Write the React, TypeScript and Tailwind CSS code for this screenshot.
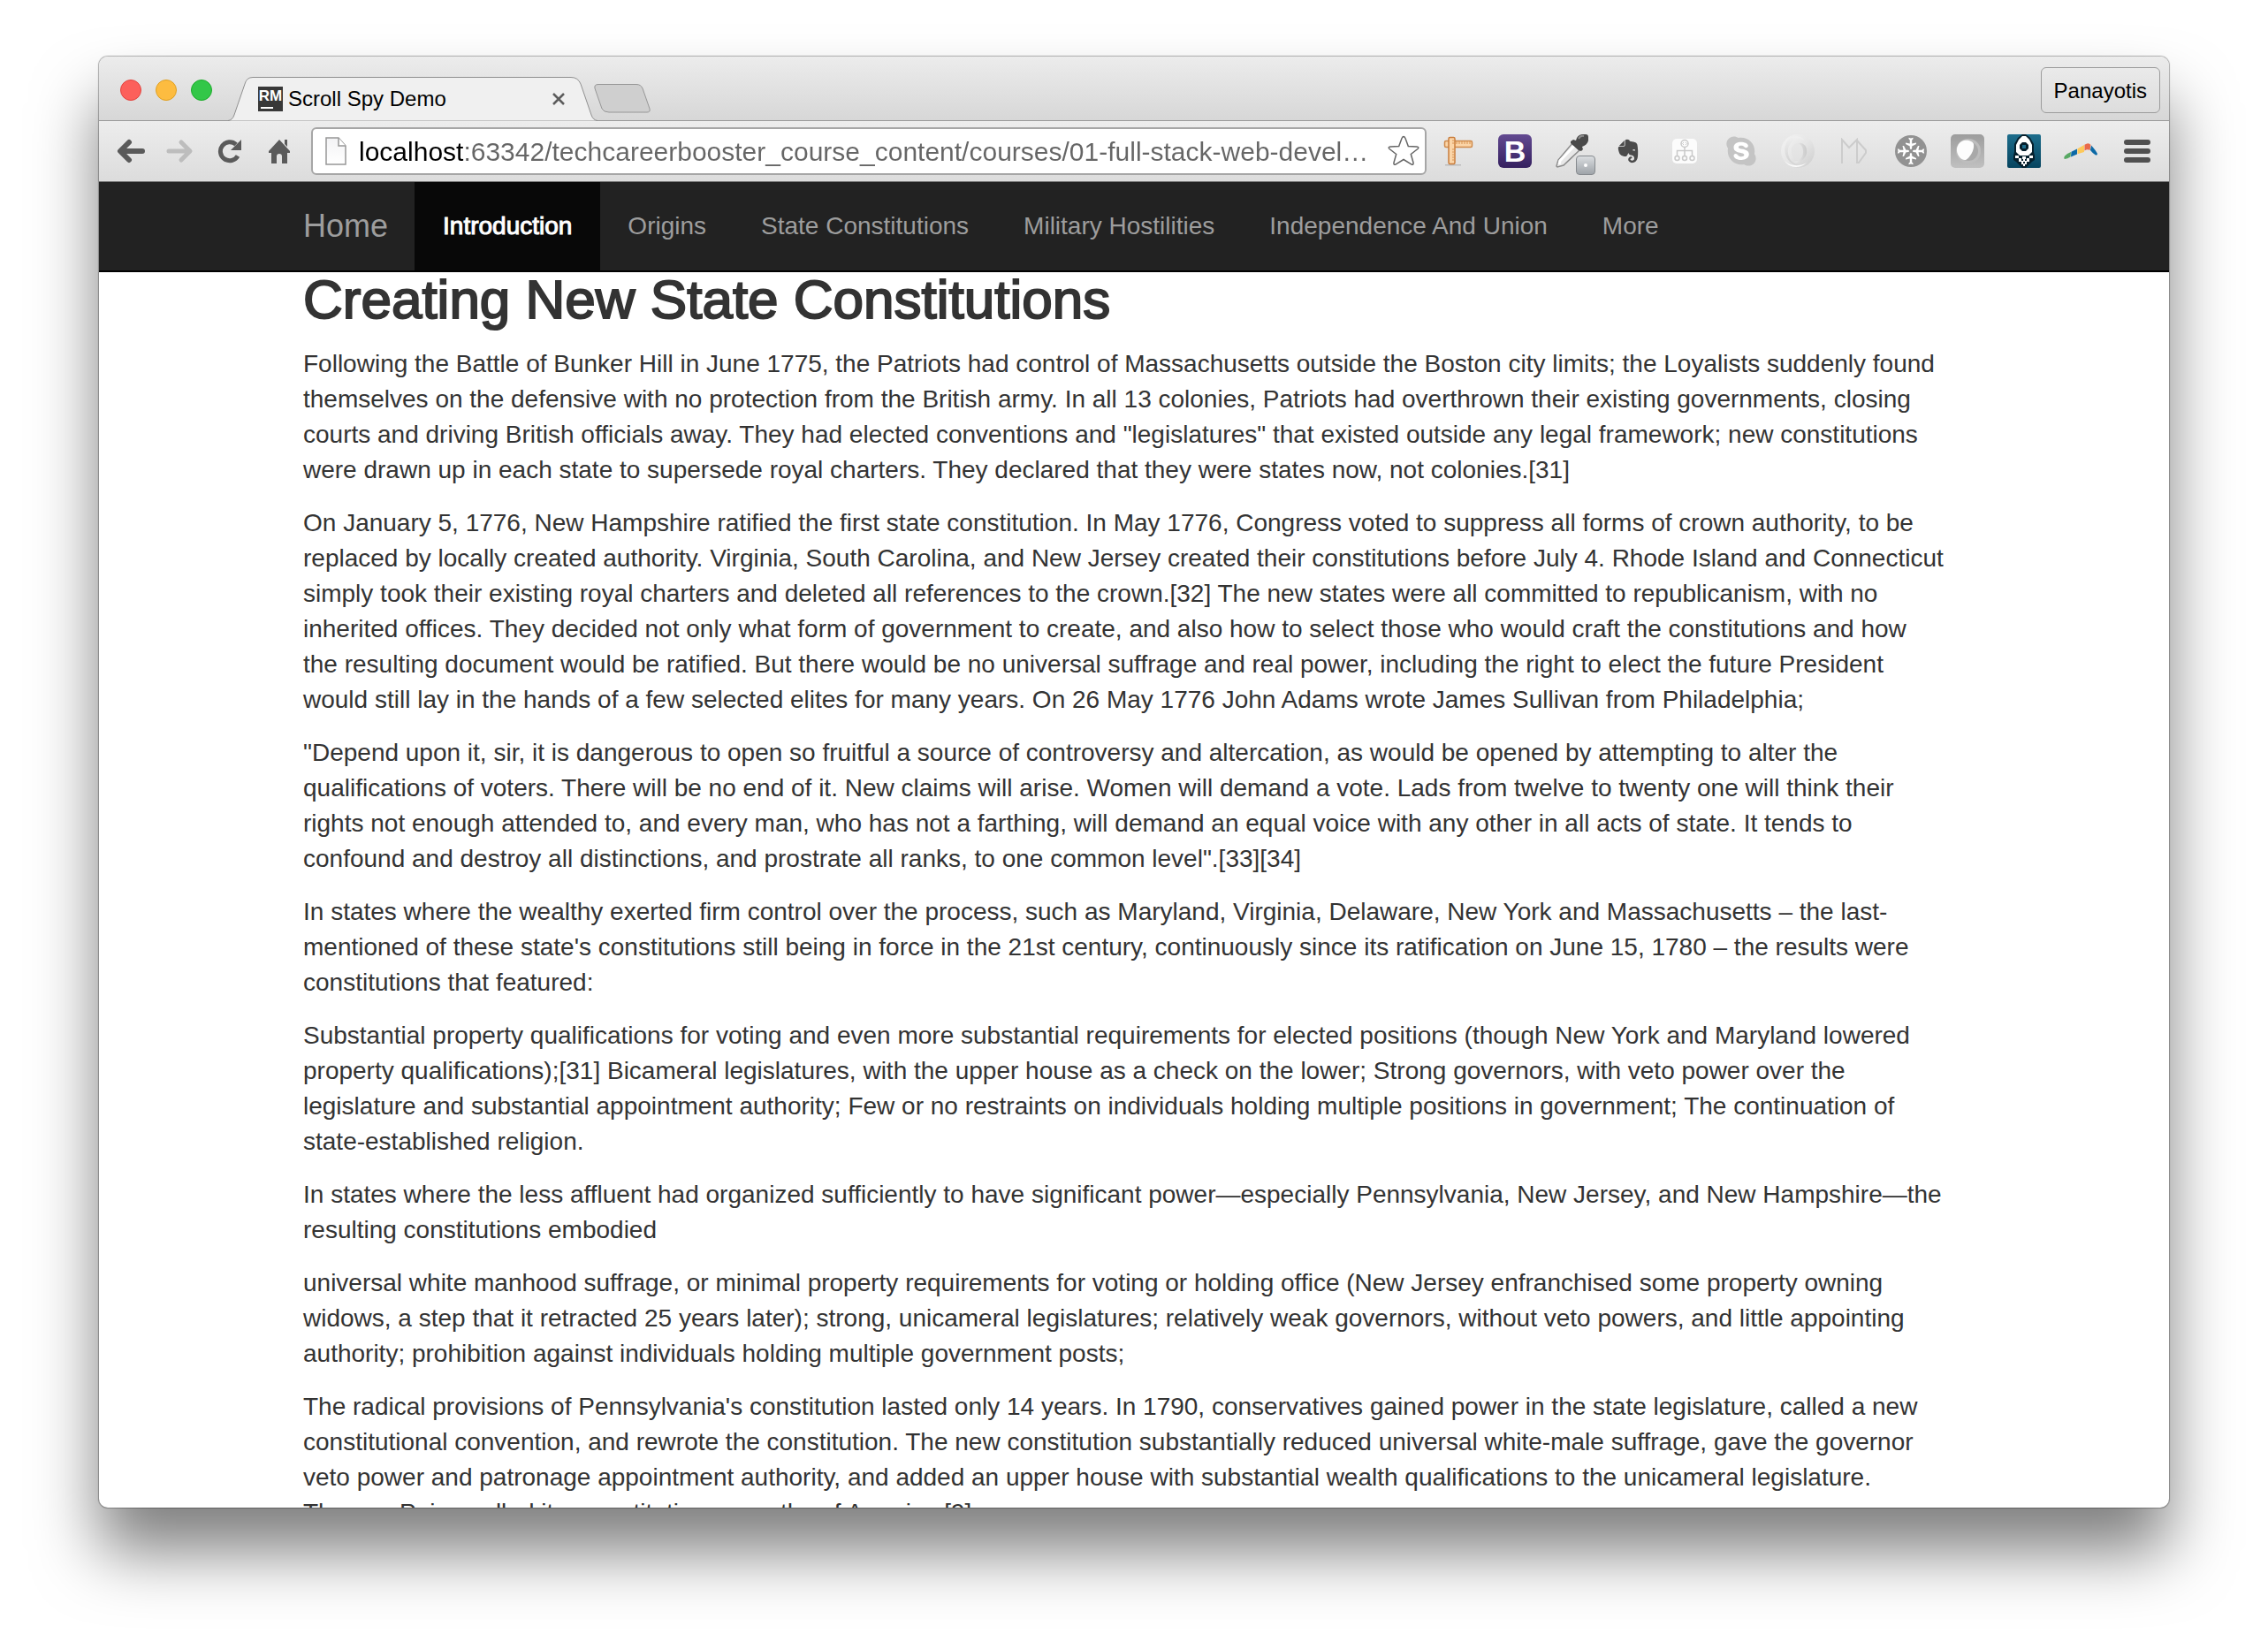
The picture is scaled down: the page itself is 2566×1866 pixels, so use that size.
import React from "react";
import { FaEvernote, FaSkype } from "react-icons/fa";

const url = "localhost:63342/techcareerbooster_course_content/courses/01-full-stack-web-devel…";

const links = [
  "Introduction",
  "Origins",
  "State Constitutions",
  "Military Hostilities",
  "Independence And Union",
  "More",
];

const paragraphs: string[][] = [
  [
    "Following the Battle of Bunker Hill in June 1775, the Patriots had control of Massachusetts outside the Boston city limits; the Loyalists suddenly found",
    "themselves on the defensive with no protection from the British army. In all 13 colonies, Patriots had overthrown their existing governments, closing",
    'courts and driving British officials away. They had elected conventions and "legislatures" that existed outside any legal framework; new constitutions',
    "were drawn up in each state to supersede royal charters. They declared that they were states now, not colonies.[31]",
  ],
  [
    "On January 5, 1776, New Hampshire ratified the first state constitution. In May 1776, Congress voted to suppress all forms of crown authority, to be",
    "replaced by locally created authority. Virginia, South Carolina, and New Jersey created their constitutions before July 4. Rhode Island and Connecticut",
    "simply took their existing royal charters and deleted all references to the crown.[32] The new states were all committed to republicanism, with no",
    "inherited offices. They decided not only what form of government to create, and also how to select those who would craft the constitutions and how",
    "the resulting document would be ratified. But there would be no universal suffrage and real power, including the right to elect the future President",
    "would still lay in the hands of a few selected elites for many years. On 26 May 1776 John Adams wrote James Sullivan from Philadelphia;",
  ],
  [
    '"Depend upon it, sir, it is dangerous to open so fruitful a source of controversy and altercation, as would be opened by attempting to alter the',
    "qualifications of voters. There will be no end of it. New claims will arise. Women will demand a vote. Lads from twelve to twenty one will think their",
    "rights not enough attended to, and every man, who has not a farthing, will demand an equal voice with any other in all acts of state. It tends to",
    'confound and destroy all distinctions, and prostrate all ranks, to one common level".[33][34]',
  ],
  [
    "In states where the wealthy exerted firm control over the process, such as Maryland, Virginia, Delaware, New York and Massachusetts – the last-",
    "mentioned of these state's constitutions still being in force in the 21st century, continuously since its ratification on June 15, 1780 – the results were",
    "constitutions that featured:",
  ],
  [
    "Substantial property qualifications for voting and even more substantial requirements for elected positions (though New York and Maryland lowered",
    "property qualifications);[31] Bicameral legislatures, with the upper house as a check on the lower; Strong governors, with veto power over the",
    "legislature and substantial appointment authority; Few or no restraints on individuals holding multiple positions in government; The continuation of",
    "state-established religion.",
  ],
  [
    "In states where the less affluent had organized sufficiently to have significant power—especially Pennsylvania, New Jersey, and New Hampshire—the",
    "resulting constitutions embodied",
  ],
  [
    "universal white manhood suffrage, or minimal property requirements for voting or holding office (New Jersey enfranchised some property owning",
    "widows, a step that it retracted 25 years later); strong, unicameral legislatures; relatively weak governors, without veto powers, and little appointing",
    "authority; prohibition against individuals holding multiple government posts;",
  ],
  [
    "The radical provisions of Pennsylvania's constitution lasted only 14 years. In 1790, conservatives gained power in the state legislature, called a new",
    "constitutional convention, and rewrote the constitution. The new constitution substantially reduced universal white-male suffrage, gave the governor",
    "veto power and patronage appointment authority, and added an upper house with substantial wealth qualifications to the unicameral legislature.",
    "Thomas Paine called it a constitution unworthy of America.[9]",
  ],
];

function BackArrow({ muted = false }: { muted?: boolean }) {
  return (
    <svg width="32" height="28" viewBox="0 0 32 28" fill="none" strokeWidth="6" strokeLinecap="round" strokeLinejoin="round">
      {muted ? (
        <path d="M3 14H26M17 4l10 10-10 10" stroke="#bdbdbd" strokeWidth="5" />
      ) : (
        <path d="M29 14H6M14 4L4 14l10 10" stroke="#5a5a5a" />
      )}
    </svg>
  );
}

function ReloadIcon() {
  return (
    <svg width="28" height="28" viewBox="0 0 28 28">
      <path d="M21 6.500A10.500 10.500 0 1 0 23 19.500" fill="none" stroke="#5a5a5a" strokeWidth="5" />
      <path d="M27 1v12H15z" fill="#5a5a5a" />
    </svg>
  );
}

function HomeIcon() {
  return (
    <svg width="26" height="28" viewBox="0 0 26 28" fill="#5a5a5a">
      <path d="M13 1L25 14v2h-3v12h-6v-8q0-3-3-3t-3 3v8H4V16H1v-2zM19 1h3v8l-3-3z" />
    </svg>
  );
}

function PageIcon() {
  return (
    <svg width="24" height="32" viewBox="0 0 24 32">
      <defs>
        <linearGradient id="page" x1="0" y1="0" x2="0" y2="1">
          <stop offset="0" stopColor="#f3f3f5" />
          <stop offset="1" stopColor="#fff" />
        </linearGradient>
      </defs>
      <path d="M1 1h14l8 9v21H1z" fill="url(#page)" stroke="#979797" strokeWidth="1.500" />
      <path d="M15 1v9h8" fill="#fff" stroke="#979797" strokeWidth="1.500" />
    </svg>
  );
}

function StarIcon() {
  return (
    <svg width="36" height="36" viewBox="0 0 36 36">
      <path
        d="M18 1.500c1 0 1.500 1 2 2l3.300 9 9.700.4c2 .1 2.300 1.500 1 2.600l-7.700 6 2.700 9.500c.5 2-.7 2.800-2.300 1.800L18 27.500l-8.700 5.300c-1.600 1-2.800.2-2.300-1.800L9.700 21.500 2 15.500c-1.300-1.100-1-2.500 1-2.600l9.700-.4 3.300-9c.5-1 1-2 2-2z"
        fill="#fff"
        stroke="#666"
        strokeWidth="1.500"
      />
    </svg>
  );
}

function RulerIcon() {
  return (
    <svg width="34" height="34" viewBox="0 0 34 34">
      <path d="M2 32h18v1.500H2z" fill="#bbb" />
      <rect x="1.500" y="5.500" width="31" height="7" rx="1.500" fill="#fbd5a8" stroke="#cf8a4b" strokeWidth="1.500" />
      <rect x="6" y="1.500" width="7" height="30" rx="1.500" fill="#fbd5a8" stroke="#c97d3c" strokeWidth="1.500" />
      <path d="M15 6v3M18 6v3M21 6v3M24 6v3M27 6v3M30 6v3M10 5h3M10 8h3M10 15h3M10 18h3M10 21h3M10 24h3M10 27h3" stroke="#d79251" />
    </svg>
  );
}

function BootstrapIcon() {
  return (
    <span className="flex size-[38px] items-center justify-center rounded-md bg-linear-to-b from-[#634a91] to-[#35205f] text-[34px] leading-none font-bold text-white">
      B
    </span>
  );
}

function DropperIcon() {
  return (
    <span className="relative block">
      <svg width="38" height="38" viewBox="0 0 38 38">
        <path d="M20 10l8 8L10 35l-7 2-1-1 2-7z" fill="#e8e8e8" stroke="#8c8c8c" strokeWidth="1.500" />
        <path d="M22 13L6 30l-1 4" stroke="#fff" strokeWidth="3" fill="none" />
        <path d="M18 8l3-2 3 1q1-6 7-7h4q3 0 3 3v4q-1 5-7 7l1 3-2 2-3-1-9-8z" fill="#4a4a4a" />
        <path d="M27 5q2-4 6-3" stroke="#8b8b8b" strokeWidth="2" fill="none" />
      </svg>
      <span className="absolute -right-2 -bottom-2 flex size-[22px] items-center justify-center rounded-sm border border-[#868a8e] bg-linear-to-b from-[#dadde0] to-[#9fa4a9]">
        <span className="size-1 rounded-full bg-white" />
      </span>
    </span>
  );
}

function SitemapIcon() {
  return (
    <svg width="28" height="28" viewBox="0 0 28 28" fill="none" stroke="#c9c9c9" strokeWidth="1.500">
      <rect width="28" height="28" rx="5" fill="#fcfcfc" stroke="none" />
      <circle cx="14" cy="5.500" r="4" />
      <path d="M13 4l-1.500 1.500L13 7M15 4l1.500 1.500L15 7" strokeWidth="1" />
      <path d="M14 9.500V19M5.500 19v-5.500h17V19" />
      <circle cx="5.500" cy="22" r="2.500" />
      <circle cx="14" cy="22" r="2.500" />
      <circle cx="22.500" cy="22" r="2.500" />
    </svg>
  );
}

function SkypeIcon() {
  return (
    <span className="flex size-[34px] items-center justify-center rounded-[14px] bg-[radial-gradient(circle,#fff_12px,transparent_13px)]">
      <FaSkype className="size-[38px] shrink-0 text-[#c4c4c4]" />
    </span>
  );
}

function RingIcon() {
  return (
    <svg width="38" height="38" viewBox="0 0 38 38" fill="none">
      <defs>
        <linearGradient id="ringOuter" x1="0" y1="0" x2="1" y2="1">
          <stop offset="0" stopColor="#f4f4f4" />
          <stop offset="0.500" stopColor="#e6e6e6" />
          <stop offset="1" stopColor="#cccccc" />
        </linearGradient>
        <linearGradient id="ringInner" x1="0" y1="0" x2="1" y2="0">
          <stop offset="0" stopColor="#f2f2f2" />
          <stop offset="1" stopColor="#cacaca" />
        </linearGradient>
        <linearGradient id="ringLeft" x1="0" y1="0" x2="0" y2="1">
          <stop offset="0" stopColor="#f0f0f0" />
          <stop offset="1" stopColor="#d0d0d0" />
        </linearGradient>
      </defs>
      <path fillRule="evenodd" d="M19 0a19 19 0 1 0 0 38a19 19 0 1 0 0-38zM19 10c4 0 7 4 7 9s-3 10-7 10-7-4-7-10 3-9 7-9z" fill="url(#ringOuter)" />
      <path d="M12 3C3 9 2 22 9 30c3 3 7 5 11 5-8-2-13-9-12-18 1-6 5-10 10-11 3-1 7 0 9 1C24 3 18 1 12 3z" fill="url(#ringLeft)" />
      <path d="M19 10c9-2 13 9 8 16-3 5-8 7-13 5 7 0 11-5 11-11 0-5-2-9-6-10z" fill="url(#ringInner)" />
      <path d="M4 30c6 6 17 7 25 2-4 4-8 5-12 5-6 0-10-3-13-7z" fill="#fafafa" />
    </svg>
  );
}

function MarkdownIcon() {
  return (
    <svg width="32" height="30" viewBox="0 0 32 30" fill="none" stroke="#cccccc" strokeWidth="2">
      <path d="M2 29V2l8 9 9-9v27M19 3l10 11v3L21 28h-2" />
    </svg>
  );
}

function PlanesIcon() {
  return (
    <svg width="36" height="36" viewBox="0 0 36 36">
      <circle cx="18" cy="18" r="18" fill="#929292" />
      {[0, 90, 180, 270].map((turn) => (
        <path
          key={turn}
          transform={`rotate(${turn} 18 18)`}
          d="M18 16c-.8 0-1.200-1-1.200-2v-1.500L12 10V8.500l4.800 1V5.500L15.500 4.300V2.800l2.500.7 2.500-.7v1.500l-1.300 1.200v4l4.800-1V10l-4.800 2.500V14c0 1-.4 2-1.200 2z"
          fill="#fff"
        />
      ))}
    </svg>
  );
}

function EggIcon() {
  return (
    <svg width="38" height="38" viewBox="0 0 38 38">
      <defs>
        <linearGradient id="tile" x1="0" y1="0" x2="0" y2="1">
          <stop offset="0" stopColor="#9d9d9d" />
          <stop offset="1" stopColor="#c0c0c0" />
        </linearGradient>
      </defs>
      <rect width="38" height="38" rx="5" fill="url(#tile)" />
      <circle cx="20" cy="19" r="14" fill="#bdbdbd" />
      <circle cx="20" cy="19" r="11" fill="#a9a9a9" />
      <path d="M15 7C20 6 25 8 26 11C27 18 22 26 17 29C12 30 6 23 7 16C8 11 11 8 15 7z" fill="#fdfdfd" />
    </svg>
  );
}

function RocketIcon() {
  return (
    <svg width="38" height="38" viewBox="0 0 38 38">
      <defs>
        <linearGradient id="rocket" x1="0" y1="0" x2="0" y2="1">
          <stop offset="0" stopColor="#1d6d8c" />
          <stop offset="1" stopColor="#06445f" />
        </linearGradient>
      </defs>
      <rect width="38" height="38" rx="2" fill="url(#rocket)" />
      <path d="M17 0h4l5 4 4 7v9l1 4v5l-3 2-3 3-4 4h-4l-4-4-3-3-3-2v-5l1-4v-9l4-7z" fill="#06202d" />
      <path d="M17 2h4l4 4 3 6v8l-4 4H14l-4-4v-8l3-6z" fill="#fff" />
      <path d="M17 9h4l3 3v4l-3 3h-4l-3-3v-4z" fill="#06202d" />
      <rect x="17" y="12" width="4" height="4" fill="#1d6d8c" />
      <path d="M9 24h4v3H9zM25 24h4v3h-4zM13 27h3v4h-3zM22 27h3v4h-3zM17 25h4v3h-4zM16 30h2v4h-2zM20 30h2v4h-2zM18 33h2v3h-2zM18 28h2v3h-2z" fill="#fff" />
    </svg>
  );
}

function BoomerangIcon() {
  return (
    <svg width="38" height="20" viewBox="0 0 38 20">
      <path d="M8 11l-.5 5.500Q4 18.500 1 19q-1.500-1 0-3.500Q3 13 8 11z" fill="#57a863" />
      <path d="M8.500 10.800L15 7.500v6l-7 3z" fill="#0c69a6" />
      <path d="M15.500 7.200L23 3v8l-7.500 2.300z" fill="#fdc95a" />
      <path d="M23.500 2.800Q28-.5 30.500 3l-1 6Q26.500 7.500 23.500 9.500z" fill="#e96a4a" />
      <path d="M31 3.500Q36 9 38 13q0 2-2 1.500-3-1.500-6-5.500z" fill="#0c69a6" />
    </svg>
  );
}

function MenuIcon() {
  return (
    <svg width="30" height="28" viewBox="0 0 30 28" fill="#505050">
      <rect y="1" width="30" height="6" rx="3" />
      <rect y="11" width="30" height="6" rx="3" />
      <rect y="21" width="30" height="6" rx="3" />
    </svg>
  );
}

const extensions: [string, React.ReactNode][] = [
  ["Page Ruler", <RulerIcon />],
  ["Bootstrap", <BootstrapIcon />],
  ["Color Picker", <DropperIcon />],
  ["Evernote", <FaEvernote className="size-[30px] text-[#4a4a4a]" />],
  ["Sitemap", <SitemapIcon />],
  ["Skype", <SkypeIcon />],
  ["Ring", <RingIcon />],
  ["Markdown", <MarkdownIcon />],
  ["Planes", <PlanesIcon />],
  ["Egg", <EggIcon />],
  ["Rocket", <RocketIcon />],
  ["Boomerang", <BoomerangIcon />],
  ["Menu", <MenuIcon />],
];

function TabStrip() {
  return (
    <header className="flex h-[73px] shrink-0 items-end border-b border-[#999] bg-linear-to-b from-[#ececec] to-[#d7d7d7]">
      <div className="flex gap-4 self-center pt-1 pl-6">
        <button aria-label="Close window" className="size-6 rounded-full border border-[#e2443f] bg-[#fc605b]" />
        <button aria-label="Minimize window" className="size-6 rounded-full border border-[#dfa023] bg-[#fdbc40]" />
        <button aria-label="Zoom window" className="size-6 rounded-full border border-[#1dac2b] bg-[#33c748]" />
      </div>
      <div className="relative -mb-px ml-[18px] flex h-[50px] w-[418px] items-center pr-8 pl-[34px]">
        <svg className="absolute inset-0" width="418" height="50" viewBox="0 0 418 50">
          <path
            d="M0 49.500Q5 49 7 43L19 8Q21 .5 28 .5H388Q396 .5 399 8L411 43Q413 49 418 49.500"
            fill="#f0f0f0"
            stroke="#8f8f8f"
          />
        </svg>
        <svg className="relative" width="28" height="28" viewBox="0 0 28 28">
          <rect width="28" height="28" fill="#383838" />
          <text x="14" y="16" fill="#fff" fontSize="17" fontWeight="700" textAnchor="middle" fontFamily="Liberation Sans, sans-serif">
            RM
          </text>
          <rect x="3" y="23" width="14" height="2" fill="#fff" />
        </svg>
        <h1 className="relative ml-1.5 text-[24px] text-black">Scroll Spy Demo</h1>
        <button aria-label="Close tab" className="relative ml-auto flex size-6 items-center justify-center">
          <svg width="16" height="16" viewBox="0 0 16 16">
            <path d="M2 2l12 12M14 2L2 14" stroke="#5c5c5c" strokeWidth="2.500" />
          </svg>
        </button>
      </div>
      <button aria-label="New tab" className="mb-2 -ml-1">
        <svg width="64" height="33" viewBox="0 0 64 33">
          <path d="M5 .5H48Q53 .5 55 5L63 28Q64 32 60 32H17Q11 32 9 28L1 5Q0 .5 5 .5z" fill="#cfcfcf" stroke="#969696" />
        </svg>
      </button>
      <button className="mr-2.5 mb-2 ml-auto h-[52px] rounded-md border border-[#9c9c9c] bg-linear-to-b from-[#eaeaea] to-[#dddddd] px-3.5 pt-0.5 text-[24px] text-black">
        Panayotis
      </button>
    </header>
  );
}

function Toolbar() {
  return (
    <div className="flex h-[69px] shrink-0 items-center border-b border-[#777] bg-linear-to-b from-[#ededed] to-[#dcdcdc] pl-2">
      <button aria-label="Back" className="flex w-14 justify-center">
        <BackArrow />
      </button>
      <button aria-label="Forward" className="flex w-14 justify-center">
        <BackArrow muted />
      </button>
      <button aria-label="Reload" className="flex w-14 justify-center">
        <ReloadIcon />
      </button>
      <button aria-label="Home page" className="flex w-14 justify-center">
        <HomeIcon />
      </button>
      <label className="ml-2 flex h-[54px] min-w-0 flex-1 items-center rounded-md border-2 border-[#a6a6a6] bg-white pr-1.5 pl-3.5">
        <PageIcon />
        <input
          aria-label="Address"
          defaultValue={url}
          className="ml-3.5 min-w-0 flex-1 bg-[linear-gradient(to_right,#000_119px,#666_119px)] bg-clip-text text-[30px] text-transparent outline-none"
        />
        <button aria-label="Bookmark this page">
          <StarIcon />
        </button>
      </label>
      <div className="ml-1 flex pr-1">
        {extensions.map(([name, icon]) => (
          <button key={name} aria-label={name} className="flex h-10 w-16 items-center justify-center">
            {icon}
          </button>
        ))}
      </div>
    </div>
  );
}

export default function App() {
  return (
    <div className="flex h-screen flex-col bg-white px-28 pt-16 pb-40 font-['Helvetica_Neue','Liberation_Sans',Arial,sans-serif]">
      <div className="flex min-h-0 flex-1 flex-col overflow-hidden rounded-[10px] bg-white shadow-[0_0_1px_1px_rgba(0,0,0,0.3),0_50px_72px_rgba(0,0,0,0.5)]">
        <TabStrip />
        <Toolbar />
        <nav className="shrink-0 border-b-2 border-black bg-[#222]">
          <div className="mx-auto flex h-[100px] max-w-[1940px] items-stretch text-[28px] text-[#9d9d9d]">
            <a href="#home" className="flex items-center px-[30px] text-[36px]">
              Home
            </a>
            {links.map((label, index) => (
              <a
                key={label}
                href={`#section-${index}`}
                className={
                  index === 0
                    ? "flex items-center bg-[#080808] px-8 text-white [-webkit-text-stroke:1px_#fff]"
                    : "flex items-center px-[31px]"
                }
              >
                {label}
              </a>
            ))}
          </div>
        </nav>
        <main className="min-h-0 flex-1 overflow-hidden">
          <div className="mx-auto max-w-[1940px] px-[30px] text-[28px] leading-10 text-[#333]">
            <h2 className="mb-[22px] text-[62px] leading-[62px] [-webkit-text-stroke:2px_#333]">Creating New State Constitutions</h2>
            {paragraphs.map((lines, index) => (
              <p key={index} className="mb-5 whitespace-nowrap">
                {lines.map((line, row) => (
                  <React.Fragment key={row}>
                    {row > 0 && <br />}
                    {line}
                  </React.Fragment>
                ))}
              </p>
            ))}
          </div>
        </main>
      </div>
    </div>
  );
}
